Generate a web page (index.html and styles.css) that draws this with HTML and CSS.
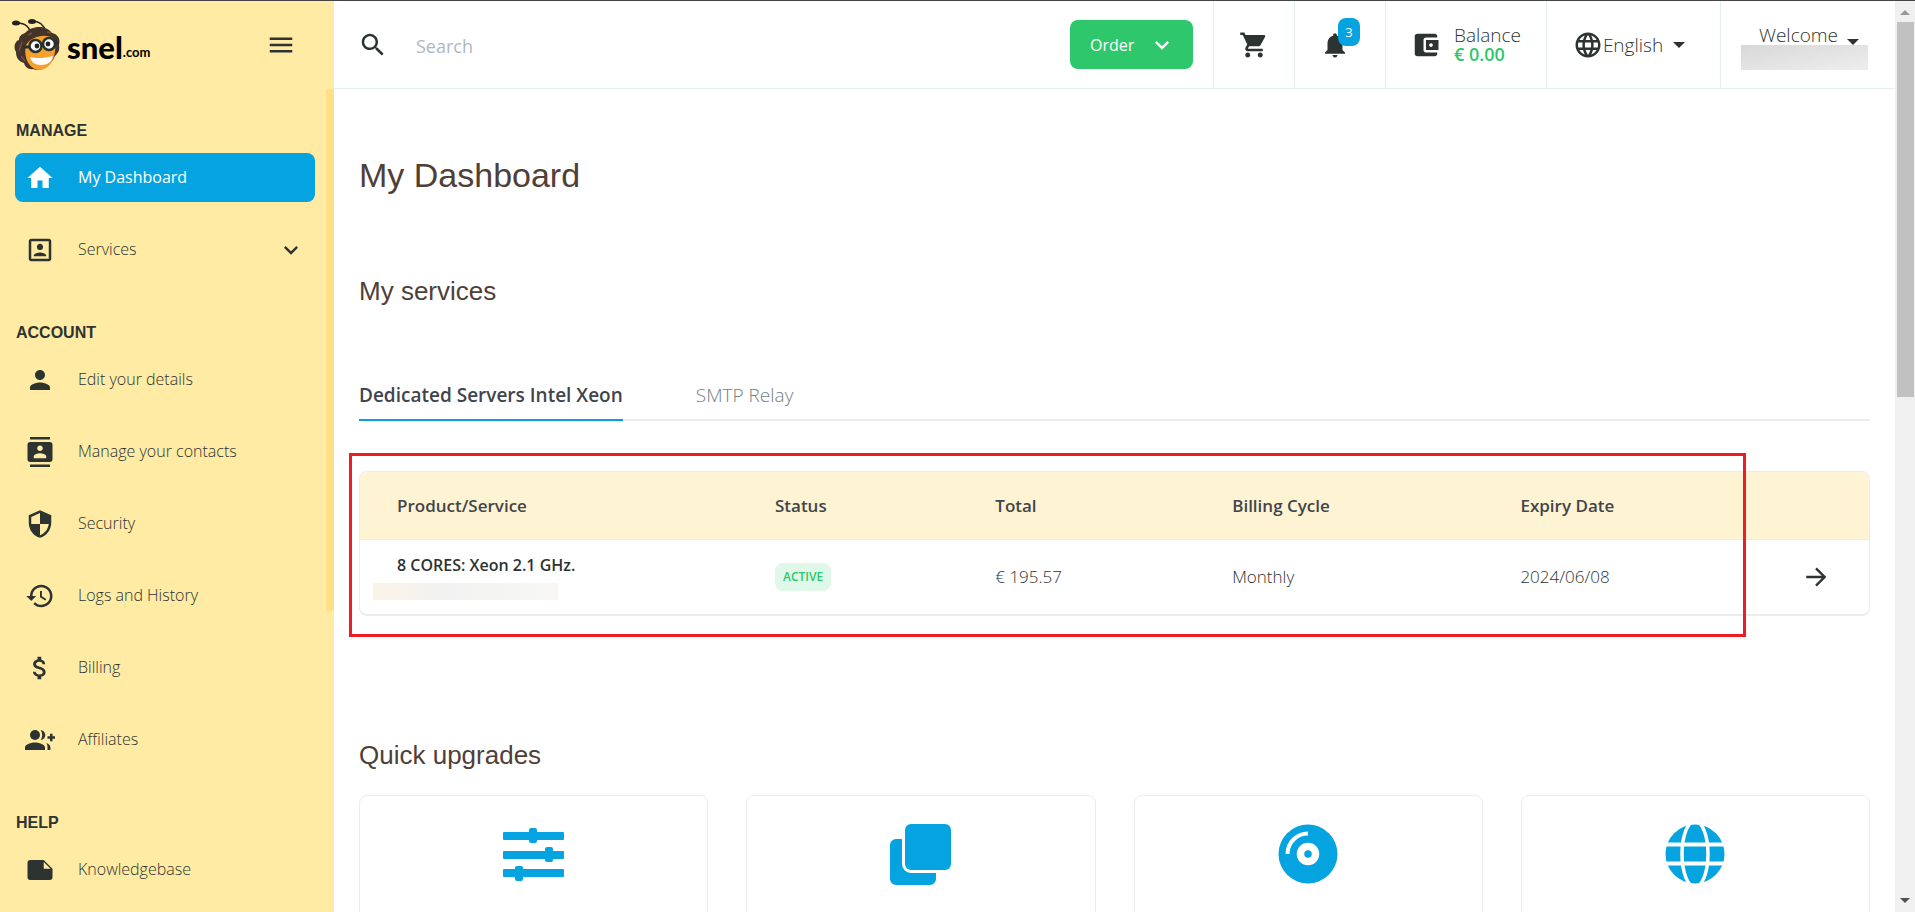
FILE: index.html
```html
<!DOCTYPE html>
<html lang="en">
<head>
    <meta charset="UTF-8">
    <meta name="viewport" content="width=device-width, initial-scale=1.0">
    <title>My Dashboard - Snel.com</title>
    <link rel="stylesheet" href="styles.css">
</head>
<body>
    <div class="app">
        <aside class="sidebar">
            <div class="sidebar-top">
                <a href="#" class="logo">
                    <svg class="logo-bee" viewBox="0 0 50 54" aria-hidden="true">
                        <path d="M19 17C18 9 13 5 5 5M34 14C32 7 27 3 20 3" fill="none" stroke="#222" stroke-width="1.5"/>
                        <ellipse cx="4" cy="5" rx="4" ry="2.500" fill="#222"/>
                        <ellipse cx="20" cy="3.500" rx="4" ry="2.500" fill="#222"/>
                        <path d="M13 15C19 8 33 6 40 15C45 16 49 20 47 27C48 33 46 35 43 38C38 49 29 54 21 51C17 52 13 49 12 45C6 43 4 39 4 34C1 29 3 23 7 22C7 18 10 16 13 15Z" fill="#44332a"/>
                        <path d="M14 27C18 19 34 14 42 21C46 34 40 51 28 52C18 52 11 41 14 27Z" fill="#f5a12c"/>
                        <path d="M16 17l4-2M35 14l4 1M10 24l-3 9M9 38l4 5" stroke="#74513a" stroke-width="1.500" fill="none"/>
                        <path d="M11 29h7M29 27h4M43 25h4" stroke="#26322f" stroke-width="3"/>
                        <ellipse cx="23.500" cy="28" rx="6" ry="6" fill="#fff" stroke="#26322f" stroke-width="2.500"/>
                        <ellipse cx="37" cy="26" rx="6" ry="6" fill="#fff" stroke="#26322f" stroke-width="2.500"/>
                        <circle cx="25" cy="28" r="2.400" fill="#222"/>
                        <circle cx="36" cy="26" r="2.400" fill="#222"/>
                        <path d="M18 39C25 41 34 40 41 38C40 44 35 47 29 47C23 47 19 44 18 39Z" fill="#fff"/>
                    </svg>
                    <span class="logo-name">snel</span><span class="logo-tld">.com</span>
                </a>
                <button type="button" class="menu-toggle" aria-label="Toggle menu">
                    <svg class="icon" viewBox="0 0 24 24"><path d="M3 18h18v-2H3v2zm0-5h18v-2H3v2zm0-7v2h18V6H3z"/></svg>
                </button>
            </div>

            <div class="sidebar-body">
                <nav class="menu">
                    <h2 class="menu-title">MANAGE</h2>
                    <a href="#" class="menu-item active">
                        <svg class="icon" viewBox="0 0 24 24"><path d="M10 20v-6h4v6h5v-8h3L12 3 2 12h3v8z"/></svg>
                        <span>My Dashboard</span>
                    </a>
                    <a href="#" class="menu-item">
                        <svg class="icon" viewBox="0 0 24 24"><path d="M19 3H5c-1.100 0-2 .900-2 2v14c0 1.100.900 2 2 2h14c1.100 0 2-.900 2-2V5c0-1.100-.900-2-2-2zm0 16H5V5h14v14zM12 12c1.380 0 2.500-1.120 2.500-2.500S13.380 7 12 7 9.500 8.120 9.500 9.500 10.620 12 12 12zm5 4.500c0-1.660-3.340-2.500-5-2.500s-5 .840-5 2.500v.5h10v-.5z"/></svg>
                        <span>Services</span>
                        <svg class="chevron" viewBox="0 0 24 24"><path d="M7.410 8.590L12 13.170l4.590-4.580L18 10l-6 6-6-6z"/></svg>
                    </a>
                </nav>

                <nav class="menu">
                    <h2 class="menu-title">ACCOUNT</h2>
                    <a href="#" class="menu-item">
                        <svg class="icon" viewBox="0 0 24 24"><path d="M12 12c2.210 0 4-1.790 4-4s-1.790-4-4-4-4 1.790-4 4 1.790 4 4 4zm0 2c-2.670 0-8 1.340-8 4v2h16v-2c0-2.660-5.330-4-8-4z"/></svg>
                        <span>Edit your details</span>
                    </a>
                    <a href="#" class="menu-item">
                        <svg class="icon" viewBox="0 0 24 24"><path d="M20 0H4v2h16V0zM4 24h16v-2H4v2zM20 4H4c-1.100 0-2 .900-2 2v12c0 1.100.900 2 2 2h16c1.100 0 2-.900 2-2V6c0-1.100-.900-2-2-2zm-8 2.750c1.240 0 2.250 1.010 2.250 2.250s-1.010 2.250-2.250 2.250S9.750 10.240 9.750 9 10.760 6.750 12 6.750zM17 17H7v-1.500c0-1.670 3.330-2.500 5-2.500s5 .830 5 2.500V17z"/></svg>
                        <span>Manage your contacts</span>
                    </a>
                    <a href="#" class="menu-item">
                        <svg class="icon" viewBox="0 0 24 24"><path d="M12 1L3 5v6c0 5.550 3.840 10.740 9 12 5.160-1.260 9-6.450 9-12V5l-9-4zm0 10.990h7c-.530 4.120-3.280 7.790-7 8.940V12H5V6.300l7-3.110v8.800z"/></svg>
                        <span>Security</span>
                    </a>
                    <a href="#" class="menu-item">
                        <svg class="icon" viewBox="0 0 24 24"><path d="M13 3c-4.970 0-9 4.030-9 9H1l3.890 3.890.070.140L9 12H6c0-3.870 3.130-7 7-7s7 3.130 7 7-3.130 7-7 7c-1.930 0-3.680-.790-4.940-2.060l-1.420 1.420C8.270 19.990 10.510 21 13 21c4.970 0 9-4.030 9-9s-4.030-9-9-9zm-1 5v5l4.280 2.540.720-1.210-3.500-2.080V8H12z"/></svg>
                        <span>Logs and History</span>
                    </a>
                    <a href="#" class="menu-item">
                        <svg class="icon" viewBox="0 0 24 24"><path d="M11.800 10.900c-2.270-.590-3-1.200-3-2.150 0-1.090 1.010-1.850 2.700-1.850 1.780 0 2.440.850 2.500 2.100h2.210c-.070-1.720-1.120-3.300-3.210-3.810V3h-3v2.160c-1.940.420-3.500 1.680-3.500 3.610 0 2.310 1.910 3.460 4.700 4.130 2.500.600 3 1.480 3 2.410 0 .690-.490 1.790-2.700 1.790-2.060 0-2.870-.920-2.980-2.100h-2.200c.120 2.190 1.760 3.420 3.680 3.830V21h3v-2.150c1.950-.370 3.500-1.500 3.500-3.550 0-2.840-2.430-3.810-4.700-4.400z"/></svg>
                        <span>Billing</span>
                    </a>
                    <a href="#" class="menu-item">
                        <svg class="icon" viewBox="0 0 24 24"><circle cx="8" cy="8" r="4"/><path d="M0 20v-2c0-2.700 5.300-4 8-4s8 1.300 8 4v2zM12.500 4.100c2.200 0 3.700 1.800 3.700 3.900s-1.500 3.900-3.700 3.900c1.700-2.200 1.700-5.600 0-7.800zM17 14.300c2 .6 3.300 1.800 3.300 3.700v2H18v-2c0-1.500-.2-2.700-1-3.700zM20 7h2v2h2v2h-2v2h-2v-2h-2V9h2z"/></svg>
                        <span>Affiliates</span>
                    </a>
                </nav>

                <nav class="menu">
                    <h2 class="menu-title">HELP</h2>
                    <a href="#" class="menu-item">
                        <svg class="icon" viewBox="0 0 24 24"><path d="M15 4H4c-1.100 0-2 .900-2 2v12c0 1.100.900 2 2 2h16c1.100 0 2-.900 2-2v-7l-7-7zm0 7V5.500l5.500 5.500H15z"/></svg>
                        <span>Knowledgebase</span>
                    </a>
                </nav>
                <div class="sidebar-scroll"></div>
            </div>
        </aside>

        <div class="page">
            <header class="topbar">
                <form class="search">
                    <label for="search" aria-label="Search">
                        <svg class="icon" viewBox="0 0 24 24"><path d="M15.500 14h-.790l-.280-.270C15.410 12.590 16 11.110 16 9.500 16 5.910 13.090 3 9.500 3S3 5.910 3 9.500 5.910 16 9.500 16c1.610 0 3.090-.590 4.230-1.570l.270.280v.790l5 4.990L20.490 19l-4.990-5zm-6 0C7.010 14 5 11.990 5 9.500S7.010 5 9.500 5 14 7.010 14 9.500 11.990 14 9.500 14z"/></svg>
                    </label>
                    <input type="text" id="search" name="search" placeholder="Search">
                </form>
                <div class="order">
                    <button type="button" class="btn-order">
                        Order
                        <svg class="chevron" viewBox="0 0 24 24"><path d="M7.410 8.590L12 13.170l4.590-4.580L18 10l-6 6-6-6z"/></svg>
                    </button>
                </div>
                <a href="#" class="top-item cart" aria-label="Cart">
                    <svg class="icon" viewBox="0 0 24 24"><path d="M7 18c-1.100 0-1.990.900-1.990 2S5.900 22 7 22s2-.900 2-2-.900-2-2-2zM1 2v2h2l3.600 7.590-1.350 2.450c-.160.280-.250.610-.250.960 0 1.100.900 2 2 2h12v-2H7.420c-.140 0-.250-.110-.250-.250l.030-.120.900-1.630h7.450c.750 0 1.410-.410 1.750-1.030l3.580-6.490c.080-.140.120-.310.120-.480 0-.550-.450-1-1-1H5.210l-.940-2H1zm16 16c-1.100 0-1.990.900-1.990 2s.890 2 1.990 2 2-.900 2-2-.900-2-2-2z"/></svg>
                </a>
                <a href="#" class="top-item bell" aria-label="Notifications">
                    <svg class="icon" viewBox="0 0 24 24"><path d="M12 22c1.100 0 2-.900 2-2h-4c0 1.100.890 2 2 2zm6-6v-5c0-3.070-1.640-5.640-4.500-6.320V4c0-.830-.670-1.500-1.500-1.500s-1.500.670-1.500 1.500v.680C7.630 5.360 6 7.920 6 11v5l-2 2v1h16v-1l-2-2z"/></svg>
                    <span class="badge">3</span>
                </a>
                <a href="#" class="top-item balance">
                    <svg class="icon" viewBox="0 0 24 24"><path d="M21 18v1c0 1.100-.900 2-2 2H5c-1.110 0-2-.900-2-2V5c0-1.100.890-2 2-2h14c1.100 0 2 .900 2 2v1h-9c-1.110 0-2 .900-2 2v8c0 1.100.890 2 2 2h9zm-9-2h10V8H12v8zm4-2.500c-.830 0-1.500-.670-1.500-1.500s.670-1.500 1.500-1.500 1.500.670 1.500 1.500-.670 1.500-1.500 1.500z"/></svg>
                    <span class="balance-text">Balance <strong>€ 0.00</strong></span>
                </a>
                <button type="button" class="top-item language">
                    <svg class="icon" viewBox="0 0 24 24"><path d="M11.990 2C6.470 2 2 6.480 2 12s4.470 10 9.990 10C17.520 22 22 17.520 22 12S17.520 2 11.990 2zm6.930 6h-2.950c-.320-1.250-.780-2.450-1.380-3.560 1.840.630 3.370 1.910 4.330 3.560zM12 4.040c.830 1.200 1.480 2.530 1.910 3.960h-3.820c.430-1.430 1.080-2.760 1.910-3.960zM4.260 14C4.100 13.360 4 12.690 4 12s.100-1.360.260-2h3.380c-.080.660-.140 1.320-.140 2s.060 1.340.140 2H4.260zm.820 2h2.950c.320 1.250.780 2.450 1.380 3.560-1.840-.630-3.370-1.900-4.330-3.560zm2.950-8H5.080c.960-1.660 2.490-2.930 4.330-3.560C8.810 5.550 8.350 6.750 8.030 8zM12 19.960c-.830-1.200-1.480-2.530-1.910-3.960h3.820c-.430 1.430-1.080 2.760-1.910 3.960zM14.340 14H9.660c-.090-.660-.160-1.320-.160-2s.070-1.350.160-2h4.680c.090.650.160 1.320.160 2s-.070 1.340-.160 2zm.250 5.560c.600-1.110 1.060-2.310 1.380-3.560h2.950c-.960 1.650-2.490 2.930-4.330 3.560zM16.360 14c.080-.660.140-1.320.140-2s-.060-1.340-.140-2h3.380c.160.640.260 1.310.260 2s-.100 1.360-.260 2h-3.380z"/></svg>
                    <span>English</span>
                    <span class="caret"></span>
                </button>
                <button type="button" class="top-item welcome">
                    <span class="welcome-row">Welcome <span class="caret"></span></span>
                    <span class="user-name"></span>
                </button>
            </header>

            <main class="content">
                <h1>My Dashboard</h1>

                <section class="services">
                    <h2>My services</h2>
                    <div class="tabs">
                        <a href="#" class="tab active">Dedicated Servers Intel Xeon</a>
                        <a href="#" class="tab">SMTP Relay</a>
                    </div>
                    <div class="table-box">
                        <table>
                            <thead>
                                <tr>
                                    <th class="col-product">Product/Service</th>
                                    <th class="col-status">Status</th>
                                    <th class="col-total">Total</th>
                                    <th class="col-cycle">Billing Cycle</th>
                                    <th class="col-expiry">Expiry Date</th>
                                    <th class="col-open"></th>
                                </tr>
                            </thead>
                            <tbody>
                                <tr>
                                    <td class="col-product">
                                        <strong>8 CORES: Xeon 2.1 GHz.</strong>
                                        <span class="host-name"></span>
                                    </td>
                                    <td><span class="status">ACTIVE</span></td>
                                    <td>€ 195.57</td>
                                    <td>Monthly</td>
                                    <td>2024/06/08</td>
                                    <td class="col-open">
                                        <a href="#" aria-label="Open service">
                                            <svg class="arrow" viewBox="0 0 24 24"><path d="M3 12h17M12 4l8 8-8 8" fill="none" stroke="#2d3331" stroke-width="2.200"/></svg>
                                        </a>
                                    </td>
                                </tr>
                            </tbody>
                        </table>
                        <div class="highlight"></div>
                    </div>
                </section>

                <section class="upgrades">
                    <h2>Quick upgrades</h2>
                    <div class="cards">
                        <a href="#" class="card" aria-label="Configure">
                            <svg viewBox="0 0 62 62"><rect y="9" width="61" height="8" rx="1"/><rect y="28" width="61" height="8" rx="1"/><rect y="46" width="61" height="8" rx="1"/><rect x="26" y="5" width="8" height="15" rx="2"/><rect x="42" y="24" width="8" height="15" rx="2"/><rect x="12" y="43" width="8" height="15" rx="2"/></svg>
                        </a>
                        <a href="#" class="card" aria-label="Copies">
                            <svg viewBox="0 0 62 62"><rect x="15" y="1" width="46" height="46" rx="6"/><path d="M12 16H6a6 6 0 0 0-6 6v34a6 6 0 0 0 6 6h34a6 6 0 0 0 6-6v-6H21a9 9 0 0 1-9-9z"/></svg>
                        </a>
                        <a href="#" class="card" aria-label="Images">
                            <svg viewBox="0 0 62 62"><circle cx="31" cy="31" r="29.500"/><circle cx="31" cy="31" r="7.500" fill="none" stroke="#fff" stroke-width="7.500"/><path d="M10.500 31A20.500 20.500 0 0 1 31 10.500" fill="none" stroke="#fff" stroke-width="4"/></svg>
                        </a>
                        <a href="#" class="card" aria-label="Network">
                            <svg viewBox="0 0 62 62"><circle cx="31" cy="31" r="29.500"/><path d="M0 21.500h62M0 40.500h62" stroke="#fff" stroke-width="4"/><ellipse cx="31" cy="31" rx="13" ry="33" fill="none" stroke="#fff" stroke-width="3.500"/></svg>
                        </a>
                    </div>
                </section>
            </main>
        </div>

        <div class="scrollbar" aria-hidden="true">
            <span class="scroll-up"></span>
            <span class="scroll-thumb"></span>
            <span class="scroll-down"></span>
        </div>
    </div>
</body>
</html>
```
FILE: styles.css
```css
/* Global Styles */
* {
    box-sizing: border-box;
}

body {
    margin: 0;
    font-family: "Open Sans", "Noto Sans", sans-serif;
    font-size: 16px;
    font-weight: 300;
    color: #2d3331;
    background: #fff;
}

a {
    color: inherit;
    text-decoration: none;
}

button,
input {
    font: inherit;
    color: inherit;
    background: none;
    border: none;
    padding: 0;
}

button {
    cursor: pointer;
}

svg {
    display: block;
    flex: none;
    fill: currentColor;
}

.app {
    display: flex;
    height: 100vh;
    overflow: hidden;
    border-top: 1px solid #444;
}

.icon {
    width: 30px;
    height: 30px;
}

.chevron {
    width: 28px;
    height: 28px;
}

/* Sidebar */
.sidebar {
    flex: none;
    width: 334px;
    background: #ffeba3;
}

.sidebar-top {
    display: flex;
    align-items: center;
    justify-content: space-between;
    height: 88px;
    padding: 0 38px 0 12px;
}

.logo {
    display: flex;
    align-items: center;
    color: #000;
    line-height: 40px;
}

.logo-bee {
    width: 50px;
    height: 54px;
    margin-right: 5px;
}

.logo-name {
    padding-top: 4px;
    font-family: Lato, sans-serif;
    font-size: 31px;
    font-weight: 900;
}

.logo-tld {
    padding-top: 14px;
    font-family: Lato, sans-serif;
    font-size: 13px;
    font-weight: 700;
}

.sidebar-body {
    position: relative;
    padding: 32px 19px 0 15px;
}

.menu {
    margin-bottom: 49px;
}

.menu-title {
    margin: 0 1px 12px;
    font-family: Arial, "Liberation Sans", sans-serif;
    font-size: 16px;
    line-height: 20px;
    font-weight: 700;
}

.menu-item {
    display: flex;
    align-items: center;
    height: 49px;
    margin-bottom: 23px;
    padding: 0 10px;
    border-radius: 8px;
}

.menu-item:last-child {
    margin-bottom: 0;
}

.menu-item span {
    flex: 1;
    margin-left: 23px;
    padding-bottom: 2px;
}

.menu-item.active {
    background: #05a4e1;
    color: #fff;
    font-weight: 400;
}

.sidebar-scroll {
    position: absolute;
    top: 0;
    right: 0;
    width: 8px;
    height: 522px;
    background: #ffdf87;
}

/* Top bar */
.page {
    flex: 1;
    min-width: 0;
}

.topbar {
    display: flex;
    height: 88px;
    border-bottom: 1px solid #e6eeee;
    font-size: 19px;
}

.search {
    flex: 1;
    display: flex;
    align-items: center;
    padding-left: 24px;
}

.search input {
    flex: 1;
    min-width: 0;
    margin: 2px 0 0 28px;
    font-size: 18px;
    font-weight: 400;
    outline: none;
}

.search input::placeholder {
    color: #aeb8c4;
}

.order {
    display: flex;
    align-items: center;
    padding-right: 20px;
}

.btn-order {
    display: flex;
    align-items: center;
    justify-content: space-between;
    width: 123px;
    height: 49px;
    padding: 0 17px 0 20px;
    border-radius: 8px;
    background: #2ec76b;
    color: #fff;
    font-size: 16px;
    font-weight: 400;
}

.top-item {
    display: flex;
    align-items: center;
    justify-content: center;
    border-left: 1px solid #e6eeee;
}

.cart {
    width: 81px;
}

.bell {
    position: relative;
    width: 91px;
    padding-right: 10px;
}

.badge {
    position: absolute;
    top: 17px;
    right: 25px;
    width: 22px;
    height: 28px;
    border-radius: 8px;
    background: #05a4e1;
    color: #fff;
    font-size: 13px;
    line-height: 28px;
    font-weight: 400;
    text-align: center;
}

.balance {
    width: 161px;
}

.balance-text {
    margin-left: 13px;
    line-height: 19px;
}

.balance-text strong {
    display: block;
    color: #2ec76b;
    font-size: 18px;
    font-weight: 600;
}

.language {
    width: 174px;
    padding-right: 9px;
}

.language .caret {
    margin-left: 10px;
}

.caret {
    display: inline-block;
    border: 6px solid transparent;
    border-top-color: #2d3331;
    border-bottom: 0;
}

.welcome {
    flex-direction: column;
    width: 175px;
    padding: 6px 8px 0 0;
}

.welcome-row {
    display: flex;
    align-items: flex-end;
    gap: 9px;
    height: 20px;
    margin-left: 10px;
    line-height: 20px;
}

.user-name {
    width: 127px;
    height: 25px;
    background: linear-gradient(170deg, #d8d8d8, #eee);
}

/* Content */
.content {
    padding: 63px 25px 0;
}

h1,
.content h2 {
    margin: 0;
    font-family: Arial, "Liberation Sans", sans-serif;
    font-weight: 400;
    color: #4f4037;
}

h1 {
    margin-bottom: 78px;
    font-size: 34px;
    line-height: 46px;
}

.content h2 {
    font-size: 26px;
    line-height: 30px;
}

.tabs {
    display: flex;
    gap: 73px;
    margin-top: 71px;
    border-bottom: 2px solid #ececf0;
    font-size: 19px;
    line-height: 28px;
}

.tab {
    margin-bottom: -2px;
    padding: 4px 0 10px;
    border-bottom: 2px solid transparent;
    color: #75807f;
}

.tab.active {
    border-bottom-color: #05a4e1;
    color: #42454b;
    font-weight: 600;
}

.table-box {
    position: relative;
    margin-top: 50px;
    border: 1px solid #ebebf0;
    border-bottom-width: 2px;
    border-radius: 8px;
}

table {
    width: 100%;
    border-collapse: collapse;
    table-layout: fixed;
    text-align: left;
    font-size: 17px;
}

th {
    height: 67px;
    padding: 0;
    border-bottom: 1px solid #ebebf0;
    background: #fef4d3;
    color: #42454b;
    font-weight: 600;
}

th:first-child {
    border-top-left-radius: 8px;
}

th:last-child {
    border-top-right-radius: 8px;
}

td {
    height: 75px;
    padding: 0;
}

.col-product {
    width: 27.5%;
    padding-left: 37px;
}

.col-status {
    width: 14.6%;
}

.col-total {
    width: 15.7%;
}

.col-cycle {
    width: 19.1%;
}

td strong {
    display: block;
    font-size: 16px;
    line-height: 22px;
    font-weight: 600;
}

.host-name {
    display: block;
    width: 185px;
    height: 17px;
    margin: 7px 0 0 -24px;
    background: linear-gradient(90deg, #fbf3e6, #f2f2f2 40%, #f8f7f4);
}

.status {
    display: inline-block;
    padding: 0 8px;
    border-radius: 8px;
    background: #e0f8e9;
    color: #2ec76b;
    font-size: 12px;
    line-height: 28px;
    font-weight: 600;
}

td.col-open {
    padding-right: 40px;
}

.arrow {
    width: 26px;
    height: 26px;
    margin-left: auto;
}

/* Red frame over the service columns */
.highlight {
    position: absolute;
    top: -19px;
    right: 123px;
    bottom: -23px;
    left: -11px;
    border: 3px solid #ee1c25;
    pointer-events: none;
}

.upgrades {
    margin-top: 124px;
}

.cards {
    display: grid;
    grid-template-columns: repeat(4, 1fr);
    gap: 38px;
    margin-top: 25px;
}

.card {
    display: flex;
    justify-content: center;
    height: 200px;
    padding-top: 27px;
    border: 1px solid #ebebf0;
    border-radius: 8px;
    color: #05a4e1;
}

.card svg {
    width: 62px;
    height: 62px;
}

/* Page scrollbar */
.scrollbar {
    display: flex;
    flex-direction: column;
    align-items: center;
    flex: none;
    width: 20px;
    padding: 9px 0;
    background: #f0f0f0;
}

.scroll-up,
.scroll-down {
    border: 5px solid transparent;
}

.scroll-up {
    border-top: 0;
    border-bottom: 5px solid #999;
}

.scroll-thumb {
    width: 17px;
    height: 42%;
    margin: 7px 0 auto;
    background: #c1c1c1;
}

.scroll-down {
    border-top: 5px solid #505050;
    border-bottom: 0;
}
```
